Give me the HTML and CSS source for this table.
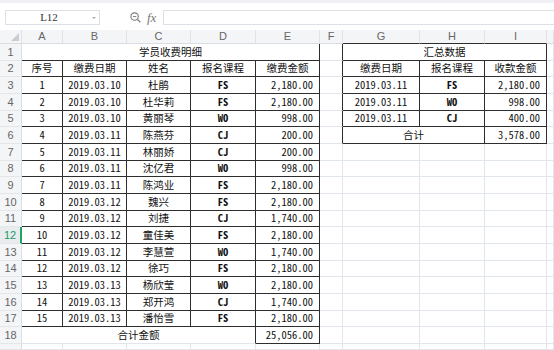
FILE: index.html
```html
<!DOCTYPE html>
<html lang="zh-CN">
<head>
<meta charset="utf-8">
<title>学员收费明细</title>
<link rel="stylesheet" href="styles.css">
</head>
<body>
<div class="toolbar">
  <div class="namebox"><span class="val">L12</span><span class="caret"></span></div>
  <svg class="search" width="11" height="11" viewBox="0 0 11 11"><circle cx="4.6" cy="4.6" r="3.7" fill="none" stroke="#7a7a7a" stroke-width="1.1"/><line x1="2.9" y1="4.6" x2="6.3" y2="4.6" stroke="#7a7a7a" stroke-width="1"/><line x1="7.4" y1="7.4" x2="10.3" y2="10.3" stroke="#7a7a7a" stroke-width="1.3"/></svg>
  <span class="fx">fx</span>
  <div class="formula"></div>
</div>
<div class="sheet">
  <!-- header -->
  <div class="c hd corner"><svg width="8" height="8" viewBox="0 0 8 8"><polygon points="8,0 8,8 0,8" fill="#c9cdd3"/></svg></div>
  <div class="c hd">A</div><div class="c hd">B</div><div class="c hd">C</div><div class="c hd">D</div><div class="c hd">E</div><div class="c hd">F</div><div class="c hd db">G</div><div class="c hd db">H</div><div class="c hd db">I</div><div class="c hd"></div>
  <!-- row 1 -->
  <div class="c rn">1</div>
  <div class="c t s5">学员收费明细</div>
  <div class="c dr"></div>
  <div class="c t s3">汇总数据</div>
  <div class="c"></div>
  <!-- row 2 -->
  <div class="c rn">2</div>
  <div class="c t">序号</div><div class="c t">缴费日期</div><div class="c t">姓名</div><div class="c t">报名课程</div><div class="c t">缴费金额</div>
  <div class="c dr"></div>
  <div class="c t">缴费日期</div><div class="c t">报名课程</div><div class="c t">收款金额</div>
  <div class="c"></div>
  <!-- row 3 -->
  <div class="c rn">3</div>
  <div class="c t">1</div><div class="c t">2019.03.10</div><div class="c t">杜鹃</div><div class="c t b">FS</div><div class="c t r">2,180.00</div>
  <div class="c dr"></div>
  <div class="c t">2019.03.11</div><div class="c t b">FS</div><div class="c t r">2,180.00</div>
  <div class="c"></div>
  <!-- row 4 -->
  <div class="c rn">4</div>
  <div class="c t">2</div><div class="c t">2019.03.10</div><div class="c t">杜华莉</div><div class="c t b">FS</div><div class="c t r">2,180.00</div>
  <div class="c dr"></div>
  <div class="c t">2019.03.11</div><div class="c t b">WO</div><div class="c t r">998.00</div>
  <div class="c"></div>
  <!-- row 5 -->
  <div class="c rn">5</div>
  <div class="c t">3</div><div class="c t">2019.03.10</div><div class="c t">黄丽琴</div><div class="c t b">WO</div><div class="c t r">998.00</div>
  <div class="c dr"></div>
  <div class="c t">2019.03.11</div><div class="c t b">CJ</div><div class="c t r">400.00</div>
  <div class="c"></div>
  <!-- row 6 -->
  <div class="c rn">6</div>
  <div class="c t">4</div><div class="c t">2019.03.11</div><div class="c t">陈燕芬</div><div class="c t b">CJ</div><div class="c t r">200.00</div>
  <div class="c dr"></div>
  <div class="c t s2">合计</div><div class="c t r">3,578.00</div>
  <div class="c"></div>
  <!-- row 7 -->
  <div class="c rn">7</div>
  <div class="c t">5</div><div class="c t">2019.03.11</div><div class="c t">林丽娇</div><div class="c t b">CJ</div><div class="c t r">200.00</div>
  <div class="c"></div><div class="c"></div><div class="c"></div><div class="c"></div><div class="c"></div>
  <!-- row 8 -->
  <div class="c rn">8</div>
  <div class="c t">6</div><div class="c t">2019.03.11</div><div class="c t">沈亿君</div><div class="c t b">WO</div><div class="c t r">998.00</div>
  <div class="c"></div><div class="c"></div><div class="c"></div><div class="c"></div><div class="c"></div>
  <!-- row 9 -->
  <div class="c rn">9</div>
  <div class="c t">7</div><div class="c t">2019.03.11</div><div class="c t">陈鸿业</div><div class="c t b">FS</div><div class="c t r">2,180.00</div>
  <div class="c"></div><div class="c"></div><div class="c"></div><div class="c"></div><div class="c"></div>
  <!-- row 10 -->
  <div class="c rn">10</div>
  <div class="c t">8</div><div class="c t">2019.03.12</div><div class="c t">魏兴</div><div class="c t b">FS</div><div class="c t r">2,180.00</div>
  <div class="c"></div><div class="c"></div><div class="c"></div><div class="c"></div><div class="c"></div>
  <!-- row 11 -->
  <div class="c rn">11</div>
  <div class="c t">9</div><div class="c t">2019.03.12</div><div class="c t">刘捷</div><div class="c t b">CJ</div><div class="c t r">1,740.00</div>
  <div class="c"></div><div class="c"></div><div class="c"></div><div class="c"></div><div class="c"></div>
  <!-- row 12 -->
  <div class="c rn sel">12</div>
  <div class="c t">10</div><div class="c t">2019.03.12</div><div class="c t">童佳美</div><div class="c t b">FS</div><div class="c t r">2,180.00</div>
  <div class="c"></div><div class="c"></div><div class="c"></div><div class="c"></div><div class="c"></div>
  <!-- row 13 -->
  <div class="c rn">13</div>
  <div class="c t">11</div><div class="c t">2019.03.12</div><div class="c t">李慧萱</div><div class="c t b">WO</div><div class="c t r">1,740.00</div>
  <div class="c"></div><div class="c"></div><div class="c"></div><div class="c"></div><div class="c"></div>
  <!-- row 14 -->
  <div class="c rn">14</div>
  <div class="c t">12</div><div class="c t">2019.03.12</div><div class="c t">徐巧</div><div class="c t b">FS</div><div class="c t r">2,180.00</div>
  <div class="c"></div><div class="c"></div><div class="c"></div><div class="c"></div><div class="c"></div>
  <!-- row 15 -->
  <div class="c rn">15</div>
  <div class="c t">13</div><div class="c t">2019.03.13</div><div class="c t">杨欣莹</div><div class="c t b">WO</div><div class="c t r">2,180.00</div>
  <div class="c"></div><div class="c"></div><div class="c"></div><div class="c"></div><div class="c"></div>
  <!-- row 16 -->
  <div class="c rn">16</div>
  <div class="c t">14</div><div class="c t">2019.03.13</div><div class="c t">郑开鸿</div><div class="c t b">CJ</div><div class="c t r">1,740.00</div>
  <div class="c"></div><div class="c"></div><div class="c"></div><div class="c"></div><div class="c"></div>
  <!-- row 17 -->
  <div class="c rn">17</div>
  <div class="c t">15</div><div class="c t">2019.03.13</div><div class="c t">潘怡雪</div><div class="c t b">FS</div><div class="c t r">2,180.00</div>
  <div class="c"></div><div class="c"></div><div class="c"></div><div class="c"></div><div class="c"></div>
  <!-- row 18 -->
  <div class="c rn">18</div>
  <div class="c dr s4">合计金额</div><div class="c t r">25,056.00</div>
  <div class="c"></div><div class="c"></div><div class="c"></div><div class="c"></div><div class="c"></div>
  <!-- row 19 (partially visible) -->
  <div class="c rn"></div>
  <div class="c"></div><div class="c"></div><div class="c"></div><div class="c"></div><div class="c"></div>
  <div class="c"></div><div class="c"></div><div class="c"></div><div class="c"></div><div class="c"></div>
</div>
</body>
</html>
```
FILE: styles.css
```css
html, body {
  margin: 0;
  padding: 0;
  background: #ffffff;
}

body {
  width: 554px;
  height: 350px;
  overflow: hidden;
  font-family: "Noto Sans CJK SC", sans-serif;
}

/* ---------- toolbar / formula bar ---------- */
.toolbar {
  height: 30px;
  box-sizing: border-box;
  border-top: 3px solid #eef0f3;
  padding: 7px 0 0 5px;
  display: flex;
  align-items: flex-start;
  background: #ffffff;
}

.namebox {
  width: 95px;
  height: 15px;
  box-sizing: border-box;
  border: 1px solid #dcdfe4;
  display: flex;
  align-items: center;
  font-family: "Liberation Serif", serif;
  font-size: 11px;
  color: #333333;
}

.namebox .val {
  flex: 1;
  text-align: center;
  line-height: 13px;
}

.namebox .caret {
  width: 0;
  height: 0;
  border-left: 2px solid transparent;
  border-right: 2px solid transparent;
  border-top: 2px solid #a8abb0;
  margin-right: 3px;
}

.search {
  margin-left: 30px;
  margin-top: 2px;
}

.fx {
  margin-left: 6px;
  font-family: "Liberation Serif", serif;
  font-style: italic;
  font-size: 13px;
  line-height: 15px;
  color: #777777;
  width: 11px;
}

.formula {
  margin-left: 5px;
  flex: 1;
  height: 15px;
  box-sizing: border-box;
  border: 1px solid #dcdfe4;
  border-right: none;
}

/* ---------- sheet grid ---------- */
.sheet {
  display: grid;
  grid-template-columns: 22px 41px 64px 64px 65px 64px 23px 77px 65px 62px 1fr;
  grid-template-rows: 14px repeat(6, 17px 16px 17px) 1fr;
  height: 320px;
  font-size: 10.5px;
  color: #111111;
  font-feature-settings: "hwid";
}

.c {
  box-sizing: border-box;
  border-right: 1px solid #e1e5ec;
  border-bottom: 1px solid #e1e5ec;
  display: flex;
  align-items: center;
  justify-content: center;
  white-space: nowrap;
  overflow: hidden;
  line-height: 1;
  min-width: 0;
}

.hd {
  background: #f4f5f7;
  border-right-color: #e0e2e6;
  border-bottom-color: #d9dce1;
  color: #666666;
  font-family: "Liberation Sans", sans-serif;
  font-size: 11px;
  font-feature-settings: normal;
}

.corner {
  justify-content: flex-end;
  align-items: flex-end;
  padding: 0 2px 2px 0;
}

.corner svg {
  display: block;
}

.rn {
  background: #f4f5f7;
  border-right-color: #dcdfe4;
  border-bottom-color: #e4e6ea;
  color: #666666;
  font-family: "Liberation Sans", sans-serif;
  font-size: 11px;
  font-feature-settings: normal;
}

.sel {
  background: #e9ecef;
  color: #1b9a64;
  border-right: 2px solid #21a366;
}

.dr {
  border-right-color: #2e2e2e;
}

.db {
  border-bottom-color: #2e2e2e;
}

.t {
  border-right-color: #2e2e2e;
  border-bottom-color: #2e2e2e;
}

.r {
  justify-content: flex-end;
  padding-right: 6px;
}

.b {
  font-weight: 700;
}

.s2 { grid-column: span 2; }
.s3 { grid-column: span 3; }
.s4 { grid-column: span 4; }
.s5 { grid-column: span 5; }
```
